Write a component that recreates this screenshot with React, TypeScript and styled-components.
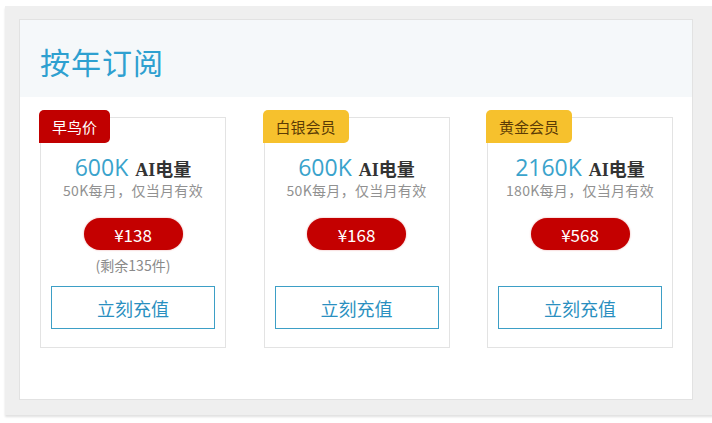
import React from "react";
import styled, { createGlobalStyle } from "styled-components";

const Global = createGlobalStyle`
  html, body { margin: 0; padding: 0; background: #ffffff; overflow: hidden; }
  body { font-family: "Noto Sans CJK SC", "Noto Sans", sans-serif; }
`;

const Page = styled.div`
  width: 712px;
  height: 423px;
  padding: 6px 0 0 5px;
  box-sizing: border-box;
`;

const Frame = styled.div`
  width: 712px;
  background: #efefef;
  padding: 13px 0 15px 14px;
  box-sizing: border-box;
  box-shadow: 0 2px 2px rgba(0, 0, 0, 0.12);
`;

const Panel = styled.div`
  width: 674px;
  height: 381px;
  box-sizing: border-box;
  background: #ffffff;
  border: 1px solid #e2e2e2;
  display: flex;
  flex-direction: column;
`;

const Header = styled.div`
  height: 77px;
  background: #f5f8fa;
  display: flex;
  align-items: center;
  padding-left: 20px;
  padding-top: 4px;
  box-sizing: border-box;
`;

const Title = styled.h1`
  margin: 0;
  font-size: 30px;
  font-weight: 400;
  color: #2ea0d0;
  letter-spacing: 1px;
`;

const Cards = styled.div`
  display: flex;
  justify-content: space-between;
  padding: 20px 19px 0 20px;
`;

const Card = styled.div`
  position: relative;
  width: 186px;
  height: 231px;
  box-sizing: border-box;
  border: 1px solid #e3e3e3;
  display: flex;
  flex-direction: column;
  align-items: center;
  padding-top: 36px;
`;

const Badge = styled.div<{ $tone: "red" | "gold" }>`
  position: absolute;
  top: -8px;
  left: -2px;
  height: 33px;
  padding: 0 13px;
  display: flex;
  align-items: center;
  border-radius: 5px 5px 5px 0;
  font-size: 15px;
  background: ${(p) => (p.$tone === "red" ? "#c10000" : "#f6c12d")};
  color: ${(p) => (p.$tone === "red" ? "#ffffff" : "#5b3b05")};
`;

const Amount = styled.div`
  display: flex;
  align-items: baseline;
  line-height: 26px;
  height: 26px;
`;

const Big = styled.span`
  font-family: "Open Sans", "Noto Sans", sans-serif;
  font-weight: 400;
  font-size: 23px;
  color: #3aa3cc;
  margin-right: 7px;
`;

const Unit = styled.span`
  font-family: "Liberation Serif", "Noto Sans CJK SC", serif;
  font-weight: 700;
  font-size: 18px;
  color: #333333;
`;

const Sub = styled.div`
  font-size: 14px;
  line-height: 20px;
  color: #919191;
  letter-spacing: 0.3px;
`;

const Price = styled.div`
  margin-top: 18px;
  width: 99px;
  height: 32px;
  border-radius: 16px;
  background: #c40000;
  color: #ffffff;
  font-size: 17px;
  display: flex;
  align-items: center;
  justify-content: center;
  box-shadow: 0 0 2px rgba(200, 0, 0, 0.4);
`;

const Remain = styled.div<{ $hidden?: boolean }>`
  margin-top: 5px;
  height: 20px;
  line-height: 20px;
  font-size: 14px;
  color: #8a8a8a;
  visibility: ${(p) => (p.$hidden ? "hidden" : "visible")};
`;

const Buy = styled.button`
  margin-top: 11px;
  width: 164px;
  height: 43px;
  box-sizing: border-box;
  background: #ffffff;
  border: 1px solid #3d9fc6;
  color: #2a8fc0;
  font-family: "Noto Sans CJK SC", sans-serif;
  font-size: 18px;
  cursor: pointer;
`;

type Plan = {
  badge: string;
  tone: "red" | "gold";
  amount: string;
  sub: string;
  price: string;
  remain?: string;
};

const plans: Plan[] = [
  { badge: "早鸟价", tone: "red", amount: "600K", sub: "50K每月，仅当月有效", price: "¥138", remain: "(剩余135件)" },
  { badge: "白银会员", tone: "gold", amount: "600K", sub: "50K每月，仅当月有效", price: "¥168" },
  { badge: "黄金会员", tone: "gold", amount: "2160K", sub: "180K每月，仅当月有效", price: "¥568" },
];

export default function App() {
  return (
    <Page>
      <Global />
      <Frame>
        <Panel>
          <Header>
            <Title>按年订阅</Title>
          </Header>
          <Cards>
            {plans.map((p, i) => (
              <Card key={i}>
                <Badge $tone={p.tone}>{p.badge}</Badge>
                <Amount>
                  <Big>{p.amount}</Big>
                  <Unit>AI电量</Unit>
                </Amount>
                <Sub>{p.sub}</Sub>
                <Price>{p.price}</Price>
                <Remain $hidden={!p.remain}>{p.remain || "-"}</Remain>
                <Buy>立刻充值</Buy>
              </Card>
            ))}
          </Cards>
        </Panel>
      </Frame>
    </Page>
  );
}
